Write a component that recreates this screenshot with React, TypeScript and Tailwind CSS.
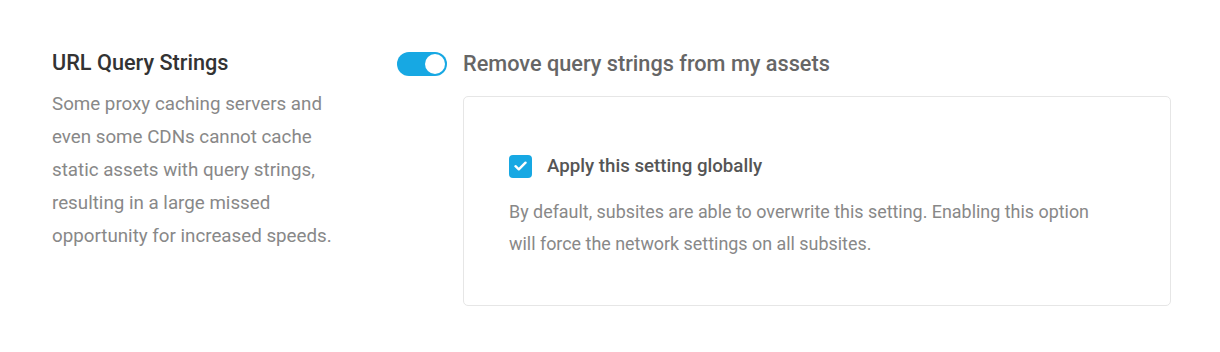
import { useState } from "react";

export default function App() {
  const [enabled, setEnabled] = useState(true);
  const [globally, setGlobally] = useState(true);

  return (
    <main
      className="min-h-screen bg-white pl-[52px] pr-[49px] pt-[46px]"
      style={{ fontFamily: "Roboto, 'Liberation Sans', sans-serif" }}
    >
      <div className="flex">
        {/* Left description */}
        <div className="w-[345px] shrink-0 pt-[2px]">
          <h3 className="text-[21.7px] leading-[30px] font-medium text-[#333]">
            URL Query Strings
          </h3>
          <p className="mt-[10px] w-[290px] text-[18.75px] leading-[33px] text-[#888]">
            Some proxy caching servers and even some CDNs cannot cache static
            assets with query strings, resulting in a large missed opportunity
            for increased speeds.
          </p>
        </div>

        {/* Right settings */}
        <div className="flex-1">
          <div className="flex items-center gap-4 pt-[6px]">
            <button
              onClick={() => setEnabled(!enabled)}
              className={`relative h-[24px] w-[50px] shrink-0 rounded-full ${
                enabled ? "bg-[#17a8e3]" : "bg-[#ddd]"
              }`}
            >
              <span
                className={`absolute top-[2px] h-[20px] w-[20px] rounded-full bg-white ${
                  enabled ? "right-[2px]" : "left-[2px]"
                }`}
              />
            </button>
            <span className="text-[21.7px] leading-[22px] font-medium text-[#666]">
              Remove query strings from my assets
            </span>
          </div>

          <div className="ml-[66px] mt-[20px] rounded-[5px] border border-[#e6e6e6] pl-[45px] pr-[70px] pt-[57px] pb-[45px]">
            <label className="flex items-center gap-[15px]">
              <button
                onClick={() => setGlobally(!globally)}
                className={`flex h-[23px] w-[23px] items-center justify-center rounded-[4px] ${
                  globally ? "bg-[#17a8e3]" : "border border-[#ccc] bg-white"
                }`}
              >
                {globally && (
                  <svg width="13" height="10" viewBox="0 0 13 10" fill="none">
                    <path
                      d="M1.5 5.2 L4.8 8.3 L11.5 1.7"
                      stroke="white"
                      strokeWidth="2.4"
                      strokeLinecap="round"
                      strokeLinejoin="round"
                    />
                  </svg>
                )}
              </button>
              <span className="text-[18.7px] leading-[24px] font-medium text-[#555]">
                Apply this setting globally
              </span>
            </label>
            <p className="mt-[18px] text-[17.9px] leading-[32px] text-[#888]">
              By default, subsites are able to overwrite this setting. Enabling
              this option will force the network settings on all subsites.
            </p>
          </div>
        </div>
      </div>
    </main>
  );
}
